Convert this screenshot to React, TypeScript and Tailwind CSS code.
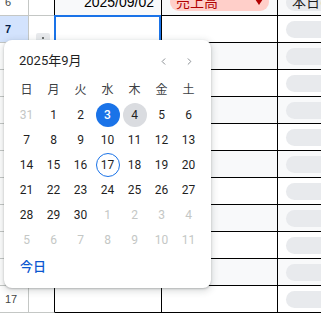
import { ChevronLeft, ChevronRight } from "lucide-react";

type Day = { n: number; out?: boolean };

const weeks: Day[][] = [
    [{ n: 31, out: true }, { n: 1 }, { n: 2 }, { n: 3 }, { n: 4 }, { n: 5 }, { n: 6 }],
    [7, 8, 9, 10, 11, 12, 13].map((n) => ({ n })),
    [14, 15, 16, 17, 18, 19, 20].map((n) => ({ n })),
    [21, 22, 23, 24, 25, 26, 27].map((n) => ({ n })),
    [{ n: 28 }, { n: 29 }, { n: 30 }, { n: 1, out: true }, { n: 2, out: true }, { n: 3, out: true }, { n: 4, out: true }],
    [5, 6, 7, 8, 9, 10, 11].map((n) => ({ n, out: true })),
];

const weekdays = ["日", "月", "火", "水", "木", "金", "土"];

const rows = [6, 7, 8, 9, 10, 11, 12, 13, 14, 15, 16, 17];

const DayCell = ({ day, wi }: { day: Day; wi: number }) => {
    const selected = wi === 0 && day.n === 3;
    const hover = wi === 0 && day.n === 4;
    const today = wi === 2 && day.n === 17;

    return (
        <div className="w-[27px] h-[25px] flex items-center justify-center">
            <div
                className={
                    "w-[24px] h-[24px] rounded-full flex items-center justify-center text-[12px] " +
                    (selected
                        ? "bg-[#1a73e8] text-white font-medium"
                        : hover
                        ? "bg-[#dadce0] text-[#1f1f1f]"
                        : today
                        ? "border border-[#1a73e8] text-[#1f1f1f]"
                        : day.out
                        ? "text-[#c4c7c5]"
                        : "text-[#1f1f1f]")
                }
            >
                {day.n}
            </div>
        </div>
    );
};

const DatePopup = () => (
    <div className="absolute left-[4px] top-[40px] w-[207px] h-[248px] bg-white rounded-[8px] shadow-[0_1px_2px_rgba(60,64,67,0.3),0_2px_6px_2px_rgba(60,64,67,0.15)] pt-[8px] px-[9px] font-['Roboto','Noto_Sans_CJK_JP',sans-serif] z-20">
        {/* month header */}
        <div className="h-[26px] flex items-center">
            <span className="pl-[6px] text-[13px] text-[#1f1f1f]">2025年9月</span>
            <div className="ml-auto flex items-center gap-[2px] pr-[1px]">
                <div className="w-[24px] h-[24px] flex items-center justify-center text-[#80868b]">
                    <ChevronLeft className="w-[11px] h-[11px]" strokeWidth={2} />
                </div>
                <div className="w-[24px] h-[24px] flex items-center justify-center text-[#80868b]">
                    <ChevronRight className="w-[11px] h-[11px]" strokeWidth={2} />
                </div>
            </div>
        </div>

        {/* weekday labels */}
        <div className="mt-[4px] h-[24px] grid grid-cols-[repeat(7,27px)]">
            {weekdays.map((w) => (
                <div key={w} className="flex items-center justify-center text-[12px] text-[#3c4043]">
                    {w}
                </div>
            ))}
        </div>

        {/* days */}
        {weeks.map((week, wi) => (
            <div key={wi} className="grid grid-cols-[repeat(7,27px)]">
                {week.map((d, di) => (
                    <DayCell key={di} day={d} wi={wi} />
                ))}
            </div>
        ))}

        <div className="mt-[3px] h-[24px] flex items-center pl-[7px] text-[13px] font-medium text-[#0b57d0]">今日</div>
    </div>
);

const SheetRow = ({ n }: { n: number }) => {
    const even = n % 2 === 0;
    const active = n === 7;
    const dataBg = even ? "bg-[#f8f9fa]" : "bg-white";

    return (
        <div className="flex h-[27px]">
            <div
                className={
                    "w-[29px] shrink-0 border-r border-b border-[#c4c7c5] flex items-center pl-[5px] text-[11px] " +
                    (active ? "bg-[#d3e3fd] text-[#041e49] font-bold" : "bg-white text-[#444746]")
                }
            >
                {n}
            </div>
            <div className="w-[26px] shrink-0 border-b border-b-[#c4c7c5] border-r border-r-black bg-white" />
            <div className={"relative w-[107px] shrink-0 border-r border-b border-black flex items-center justify-end pr-[7px] " + dataBg}>
                {n === 6 && <span className="text-[14px] text-black">2025/09/02</span>}
                {active && <div className="absolute -left-px -top-px right-0 bottom-0 border-2 border-[#1a73e8]" />}
            </div>
            <div className={"w-[116px] shrink-0 border-r border-b border-black flex items-center pl-[8px] pr-[8px] " + dataBg}>
                {n === 6 && (
                    <div className="w-full h-[18px] rounded-[9px] bg-[#ffcfc9] flex items-center pl-[6px] pr-[6px]">
                        <span className="text-[14px] text-[#b10202]">売上高</span>
                        <svg className="ml-auto" width="8" height="6" viewBox="0 0 8 6">
                            <path d="M0 0 L8 0 L4 6 Z" fill="#b10202" />
                        </svg>
                    </div>
                )}
            </div>
            <div className={"flex-1 border-b border-black flex items-center pl-[8px] " + dataBg}>
                <div className="w-full h-[17px] rounded-l-full bg-[#e8eaed] flex items-center pl-[6px]">
                    {n === 6 && <span className="text-[14px] text-[#1f1f1f] whitespace-nowrap">本日の</span>}
                </div>
            </div>
        </div>
    );
};

export default function App() {
    return (
        <div className="relative w-[321px] h-[313px] overflow-hidden bg-white font-['Liberation_Sans','Noto_Sans_CJK_JP',sans-serif]">
            <div className="-mt-[11px]">
                {rows.map((n) => (
                    <SheetRow key={n} n={n} />
                ))}
            </div>

            {/* cell menu handle peeking behind the picker */}
            <div className="absolute left-[36px] top-[33px] w-[14px] h-[9px] rounded-[2px] bg-[#e8eaed] flex items-center justify-center z-10">
                <div className="w-[2px] h-[2px] rounded-full bg-[#444746]" />
            </div>

            <DatePopup />
        </div>
    );
}
